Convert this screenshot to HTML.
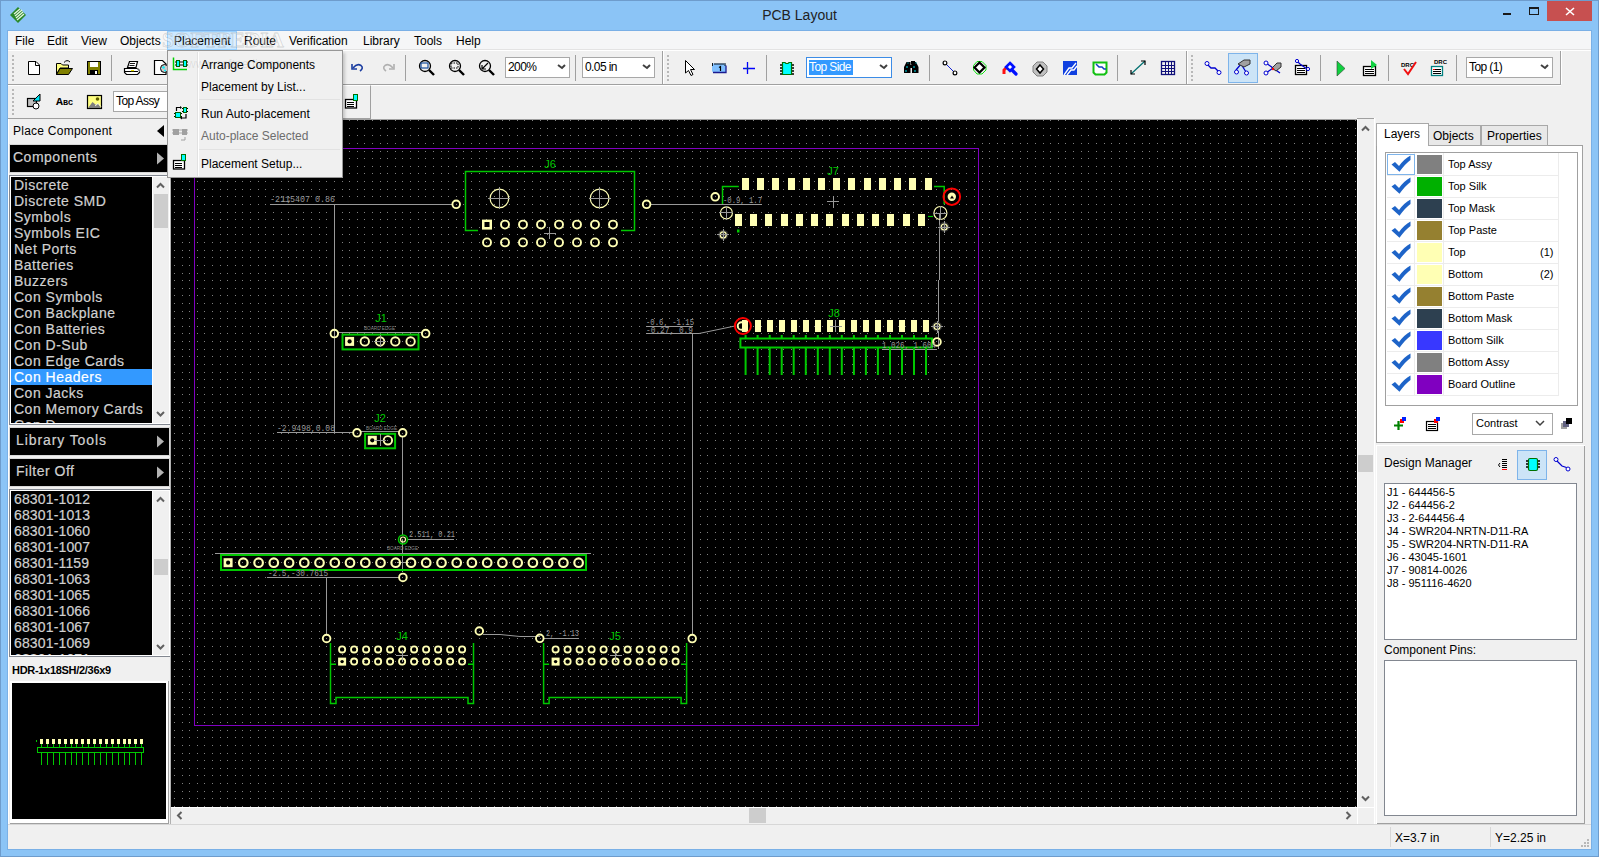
<!DOCTYPE html><html><head><meta charset="utf-8"><style>
*{box-sizing:border-box;margin:0;padding:0}
html,body{width:1599px;height:857px;overflow:hidden}
body{position:relative;background:#8bc4f6;font-family:"Liberation Sans",sans-serif;font-size:12px;color:#000}
.a{position:absolute}
.t{position:absolute;white-space:nowrap;line-height:1}
svg{position:absolute;overflow:visible}
</style></head><body>
<div class="a" style="left:0;top:0;width:1599px;height:857px;border:1px solid #6e9ccc"></div><svg style="left:0;top:0" width="1599" height="31">
<g transform="translate(18,15)"><path d="M0,-8 L8,0 L0,8 L-8,0Z" fill="#2a8a2a"/>
<path d="M-4,-1 L2,-6 M-3,1 L4,-5 M-2,3 L5,-3 M-1,5 L6,-1" stroke="#e8f5e0" stroke-width="1.3"/></g>
<rect x="1503" y="13" width="8" height="2" fill="#1a1a1a"/>
<rect x="1529.5" y="7.5" width="9" height="7" fill="none" stroke="#1a1a1a" stroke-width="1"/>
<rect x="1529" y="7" width="10" height="2" fill="#1a1a1a"/>
<rect x="1547" y="1" width="45" height="20" fill="#c75050"/>
<path d="M1566,8 L1574,15 M1574,8 L1566,15" stroke="#fff" stroke-width="1.6"/>
</svg><div class="t" style="left:0;width:1599px;text-align:center;top:8px;font-size:14px;color:#222">PCB Layout</div><div class="a" style="left:7px;top:30px;width:1585px;height:820px;border:1px solid #7ab0e6"></div><div class="a" style="left:8px;top:31px;width:1583px;height:818px;background:#f0f0f0"></div><div class="a" style="left:8px;top:31px;width:1583px;height:19px;background:#f5f6f7;border-bottom:1px solid #e3e3e3"></div><div class="a" style="left:167px;top:31px;width:70px;height:19px;background:#cce8ff;border:1px solid #99d1ff"></div><div class="t" style="left:15px;top:35px;font-size:12px">File</div><div class="t" style="left:47px;top:35px;font-size:12px">Edit</div><div class="t" style="left:81px;top:35px;font-size:12px">View</div><div class="t" style="left:120px;top:35px;font-size:12px">Objects</div><div class="t" style="left:174px;top:35px;font-size:12px">Placement</div><div class="t" style="left:244px;top:35px;font-size:12px">Route</div><div class="t" style="left:289px;top:35px;font-size:12px">Verification</div><div class="t" style="left:363px;top:35px;font-size:12px">Library</div><div class="t" style="left:414px;top:35px;font-size:12px">Tools</div><div class="t" style="left:456px;top:35px;font-size:12px">Help</div><div class="a" style="left:8px;top:50px;width:1583px;height:1px;background:#fff"></div><div class="a" style="left:8px;top:84px;width:1553px;height:1px;background:#a0a0a0"></div><div class="a" style="left:8px;top:85px;width:1553px;height:1px;background:#fff"></div><div class="a" style="left:8px;top:85px;width:363px;height:34px;border-top:1px solid #fff;border-bottom:1px solid #a0a0a0;border-right:1px solid #a0a0a0"></div><svg style="left:0;top:0" width="1" height="1"><text x="162" y="47" font-family="Liberation Serif" font-size="21" font-weight="bold" fill="rgba(255,255,255,0.35)" stroke="rgba(90,90,90,0.22)" stroke-width="0.8" textLength="122" lengthAdjust="spacingAndGlyphs">SOFTPEDIA</text></svg><svg style="left:171px;top:120px;overflow:hidden" width="1186" height="687" viewBox="171 120 1186 687"><rect x="171" y="120" width="1186" height="687" fill="#000"/><defs><mask id="gm" maskUnits="userSpaceOnUse" x="171" y="120" width="1186" height="687"><path d="M171 120.5h1186M171 128.5h1186M171 135.5h1186M171 143.5h1186M171 151.5h1186M171 158.5h1186M171 166.5h1186M171 173.5h1186M171 181.5h1186M171 189.5h1186M171 196.5h1186M171 204.5h1186M171 212.5h1186M171 219.5h1186M171 227.5h1186M171 234.5h1186M171 242.5h1186M171 250.5h1186M171 257.5h1186M171 265.5h1186M171 273.5h1186M171 280.5h1186M171 288.5h1186M171 295.5h1186M171 303.5h1186M171 311.5h1186M171 318.5h1186M171 326.5h1186M171 333.5h1186M171 341.5h1186M171 349.5h1186M171 356.5h1186M171 364.5h1186M171 372.5h1186M171 379.5h1186M171 387.5h1186M171 394.5h1186M171 402.5h1186M171 410.5h1186M171 417.5h1186M171 425.5h1186M171 433.5h1186M171 440.5h1186M171 448.5h1186M171 455.5h1186M171 463.5h1186M171 471.5h1186M171 478.5h1186M171 486.5h1186M171 493.5h1186M171 501.5h1186M171 509.5h1186M171 516.5h1186M171 524.5h1186M171 532.5h1186M171 539.5h1186M171 547.5h1186M171 554.5h1186M171 562.5h1186M171 570.5h1186M171 577.5h1186M171 585.5h1186M171 593.5h1186M171 600.5h1186M171 608.5h1186M171 615.5h1186M171 623.5h1186M171 631.5h1186M171 638.5h1186M171 646.5h1186M171 654.5h1186M171 661.5h1186M171 669.5h1186M171 676.5h1186M171 684.5h1186M171 692.5h1186M171 699.5h1186M171 707.5h1186M171 714.5h1186M171 722.5h1186M171 730.5h1186M171 737.5h1186M171 745.5h1186M171 753.5h1186M171 760.5h1186M171 768.5h1186M171 775.5h1186M171 783.5h1186M171 791.5h1186M171 798.5h1186M171 806.5h1186" stroke="#fff" stroke-width="1" shape-rendering="crispEdges"/></mask></defs><path mask="url(#gm)" d="M174.5 120v687M182.5 120v687M189.5 120v687M197.5 120v687M204.5 120v687M212.5 120v687M220.5 120v687M227.5 120v687M235.5 120v687M242.5 120v687M250.5 120v687M258.5 120v687M265.5 120v687M273.5 120v687M281.5 120v687M288.5 120v687M296.5 120v687M303.5 120v687M311.5 120v687M319.5 120v687M326.5 120v687M334.5 120v687M342.5 120v687M349.5 120v687M357.5 120v687M364.5 120v687M372.5 120v687M380.5 120v687M387.5 120v687M395.5 120v687M402.5 120v687M410.5 120v687M418.5 120v687M425.5 120v687M433.5 120v687M441.5 120v687M448.5 120v687M456.5 120v687M463.5 120v687M471.5 120v687M479.5 120v687M486.5 120v687M494.5 120v687M502.5 120v687M509.5 120v687M517.5 120v687M524.5 120v687M532.5 120v687M540.5 120v687M547.5 120v687M555.5 120v687M563.5 120v687M570.5 120v687M578.5 120v687M585.5 120v687M593.5 120v687M601.5 120v687M608.5 120v687M616.5 120v687M623.5 120v687M631.5 120v687M639.5 120v687M646.5 120v687M654.5 120v687M662.5 120v687M669.5 120v687M677.5 120v687M684.5 120v687M692.5 120v687M700.5 120v687M707.5 120v687M715.5 120v687M723.5 120v687M730.5 120v687M738.5 120v687M745.5 120v687M753.5 120v687M761.5 120v687M768.5 120v687M776.5 120v687M783.5 120v687M791.5 120v687M799.5 120v687M806.5 120v687M814.5 120v687M822.5 120v687M829.5 120v687M837.5 120v687M844.5 120v687M852.5 120v687M860.5 120v687M867.5 120v687M875.5 120v687M883.5 120v687M890.5 120v687M898.5 120v687M905.5 120v687M913.5 120v687M921.5 120v687M928.5 120v687M936.5 120v687M944.5 120v687M951.5 120v687M959.5 120v687M966.5 120v687M974.5 120v687M982.5 120v687M989.5 120v687M997.5 120v687M1004.5 120v687M1012.5 120v687M1020.5 120v687M1027.5 120v687M1035.5 120v687M1043.5 120v687M1050.5 120v687M1058.5 120v687M1065.5 120v687M1073.5 120v687M1081.5 120v687M1088.5 120v687M1096.5 120v687M1104.5 120v687M1111.5 120v687M1119.5 120v687M1126.5 120v687M1134.5 120v687M1142.5 120v687M1149.5 120v687M1157.5 120v687M1164.5 120v687M1172.5 120v687M1180.5 120v687M1187.5 120v687M1195.5 120v687M1203.5 120v687M1210.5 120v687M1218.5 120v687M1225.5 120v687M1233.5 120v687M1241.5 120v687M1248.5 120v687M1256.5 120v687M1264.5 120v687M1271.5 120v687M1279.5 120v687M1286.5 120v687M1294.5 120v687M1302.5 120v687M1309.5 120v687M1317.5 120v687M1325.5 120v687M1332.5 120v687M1340.5 120v687M1347.5 120v687M1355.5 120v687" stroke="#808080" stroke-width="1" shape-rendering="crispEdges"/><rect x="194.5" y="148.5" width="784" height="577" fill="none" stroke="#8000c0" stroke-width="1" shape-rendering="crispEdges"/><path d="M270 204.5H452" fill="none" stroke="#999999" stroke-width="1" shape-rendering="crispEdges"/><path d="M334.5 204V433" fill="none" stroke="#999999" stroke-width="1" shape-rendering="crispEdges"/><path d="M650 204.5H762" fill="none" stroke="#999999" stroke-width="1" shape-rendering="crispEdges"/><path d="M939.5 213V280 M938.5 280V349" fill="none" stroke="#999999" stroke-width="1" shape-rendering="crispEdges"/><path d="M646 326.5H693 M646 333.5H699" fill="none" stroke="#999999" stroke-width="1" shape-rendering="crispEdges"/><path d="M699 333.5L735 326" fill="none" stroke="#999999" stroke-width="1"/><path d="M692.5 333V634" fill="none" stroke="#999999" stroke-width="1" shape-rendering="crispEdges"/><path d="M882 349.5H937" fill="none" stroke="#999999" stroke-width="1" shape-rendering="crispEdges"/><path d="M338 332.5H422" fill="none" stroke="#999999" stroke-width="1" shape-rendering="crispEdges"/><path d="M277 432.5H353 M361 431.5H399" fill="none" stroke="#999999" stroke-width="1" shape-rendering="crispEdges"/><path d="M402.5 437V535" fill="none" stroke="#999999" stroke-width="1" shape-rendering="crispEdges"/><path d="M215 553.5H591" fill="none" stroke="#999999" stroke-width="1" shape-rendering="crispEdges"/><path d="M267 577.5H399" fill="none" stroke="#999999" stroke-width="1" shape-rendering="crispEdges"/><path d="M326.5 577V634" fill="none" stroke="#999999" stroke-width="1" shape-rendering="crispEdges"/><path d="M402.5 540V572 M397 562.5H409" fill="none" stroke="#999999" stroke-width="1" shape-rendering="crispEdges"/><path d="M407 539.5H454" fill="none" stroke="#999999" stroke-width="1" shape-rendering="crispEdges"/><path d="M483 634.5H500 L520 636.5 H540" fill="none" stroke="#999999" stroke-width="1"/><path d="M543 638.5H579" fill="none" stroke="#999999" stroke-width="1" shape-rendering="crispEdges"/><text x="550.0" y="168.0" fill="#00c800" font-family="Liberation Sans" font-size="11" text-anchor="middle">J6</text><path d="M478 230.5H465.5V171.5H634.5V230.5H621" fill="none" stroke="#00c800" stroke-width="1.5"/><circle cx="499.4" cy="198.4" r="9.3" fill="none" stroke="#ffffb4" stroke-width="1.2"/><path d="M488.4 198.4h22 M499.4 187.4v22" fill="none" stroke="#999999" stroke-width="1" shape-rendering="crispEdges"/><circle cx="599.6" cy="198.4" r="9.3" fill="none" stroke="#ffffb4" stroke-width="1.2"/><path d="M588.6 198.4h22 M599.6 187.4v22" fill="none" stroke="#999999" stroke-width="1" shape-rendering="crispEdges"/><rect x="482" y="219.6" width="10" height="10" fill="#ffffb4"/><rect x="484.5" y="222" width="5" height="5" fill="#000"/><circle cx="487.0" cy="242.4" r="4.0" fill="none" stroke="#ffffb4" stroke-width="1.92"/><circle cx="505.0" cy="224.6" r="4.0" fill="none" stroke="#ffffb4" stroke-width="1.92"/><circle cx="505.0" cy="242.4" r="4.0" fill="none" stroke="#ffffb4" stroke-width="1.92"/><circle cx="523.0" cy="224.6" r="4.0" fill="none" stroke="#ffffb4" stroke-width="1.92"/><circle cx="523.0" cy="242.4" r="4.0" fill="none" stroke="#ffffb4" stroke-width="1.92"/><circle cx="541.0" cy="224.6" r="4.0" fill="none" stroke="#ffffb4" stroke-width="1.92"/><circle cx="541.0" cy="242.4" r="4.0" fill="none" stroke="#ffffb4" stroke-width="1.92"/><circle cx="559.0" cy="224.6" r="4.0" fill="none" stroke="#ffffb4" stroke-width="1.92"/><circle cx="559.0" cy="242.4" r="4.0" fill="none" stroke="#ffffb4" stroke-width="1.92"/><circle cx="577.0" cy="224.6" r="4.0" fill="none" stroke="#ffffb4" stroke-width="1.92"/><circle cx="577.0" cy="242.4" r="4.0" fill="none" stroke="#ffffb4" stroke-width="1.92"/><circle cx="595.0" cy="224.6" r="4.0" fill="none" stroke="#ffffb4" stroke-width="1.92"/><circle cx="595.0" cy="242.4" r="4.0" fill="none" stroke="#ffffb4" stroke-width="1.92"/><circle cx="613.0" cy="224.6" r="4.0" fill="none" stroke="#ffffb4" stroke-width="1.92"/><circle cx="613.0" cy="242.4" r="4.0" fill="none" stroke="#ffffb4" stroke-width="1.92"/><path d="M543.6 233.2h12 M549.6 227.2v12" fill="none" stroke="#999999" stroke-width="1" shape-rendering="crispEdges"/><circle cx="456.2" cy="204.3" r="3.8" fill="none" stroke="#ffffb4" stroke-width="1.92"/><circle cx="646.6" cy="204.3" r="3.8" fill="none" stroke="#ffffb4" stroke-width="1.92"/><text x="833.0" y="175.0" fill="#00c800" font-family="Liberation Sans" font-size="11" text-anchor="middle">J7</text><circle cx="715.2" cy="196.8" r="3.8" fill="none" stroke="#ffffb4" stroke-width="1.92"/><path d="M738.8 186.5H722.5V204" fill="none" stroke="#00c800" stroke-width="1.5"/><text x="723.0" y="203.0" fill="#999999" font-family="Liberation Mono" font-size="9" textLength="39" lengthAdjust="spacingAndGlyphs">-0.9, 1.7</text><text x="270.0" y="202.0" fill="#999999" font-family="Liberation Mono" font-size="9" textLength="65" lengthAdjust="spacingAndGlyphs">-2.15407 0.86</text><text x="280.0" y="202.0" fill="#999999" font-family="Liberation Mono" font-size="9" textLength="12" lengthAdjust="spacingAndGlyphs">1;</text><rect x="742" y="178" width="7" height="12" fill="#ffffb4"/><rect x="735" y="214" width="7" height="12" fill="#ffffb4"/><rect x="757" y="178" width="7" height="12" fill="#ffffb4"/><rect x="750" y="214" width="7" height="12" fill="#ffffb4"/><rect x="772" y="178" width="7" height="12" fill="#ffffb4"/><rect x="765" y="214" width="7" height="12" fill="#ffffb4"/><rect x="788" y="178" width="7" height="12" fill="#ffffb4"/><rect x="781" y="214" width="7" height="12" fill="#ffffb4"/><rect x="803" y="178" width="7" height="12" fill="#ffffb4"/><rect x="796" y="214" width="7" height="12" fill="#ffffb4"/><rect x="818" y="178" width="7" height="12" fill="#ffffb4"/><rect x="811" y="214" width="7" height="12" fill="#ffffb4"/><rect x="833" y="178" width="7" height="12" fill="#ffffb4"/><rect x="826" y="214" width="7" height="12" fill="#ffffb4"/><rect x="848" y="178" width="7" height="12" fill="#ffffb4"/><rect x="842" y="214" width="7" height="12" fill="#ffffb4"/><rect x="864" y="178" width="7" height="12" fill="#ffffb4"/><rect x="857" y="214" width="7" height="12" fill="#ffffb4"/><rect x="879" y="178" width="7" height="12" fill="#ffffb4"/><rect x="872" y="214" width="7" height="12" fill="#ffffb4"/><rect x="894" y="178" width="7" height="12" fill="#ffffb4"/><rect x="887" y="214" width="7" height="12" fill="#ffffb4"/><rect x="909" y="178" width="7" height="12" fill="#ffffb4"/><rect x="903" y="214" width="7" height="12" fill="#ffffb4"/><rect x="925" y="178" width="7" height="12" fill="#ffffb4"/><rect x="918" y="214" width="7" height="12" fill="#ffffb4"/><path d="M827.3 201.6h12 M833.3 195.6v12" fill="none" stroke="#999999" stroke-width="1" shape-rendering="crispEdges"/><circle cx="726.4" cy="212.9" r="6.0" fill="none" stroke="#ffffb4" stroke-width="1.2"/><path d="M719.4 212.9h14 M726.4 205.9v14" fill="none" stroke="#999999" stroke-width="1" shape-rendering="crispEdges"/><rect x="737" y="229.5" width="2.5" height="3" fill="#00c800"/><circle cx="723.2" cy="234.9" r="5" fill="#303030"/><circle cx="723.2" cy="234.9" r="3.0" fill="none" stroke="#ffffb4" stroke-width="1.2"/><path d="M717.2 234.9h12 M723.2 228.9v12" fill="none" stroke="#999999" stroke-width="1" shape-rendering="crispEdges"/><path d="M934 186.5H944.2V204.3" fill="none" stroke="#00c800" stroke-width="1.5"/><circle cx="951.8" cy="196.7" r="8.3" fill="none" stroke="#ff0000" stroke-width="2"/><circle cx="951.8" cy="196.7" r="4.2" fill="#ffffb4"/><path d="M950 198.5h4l-2 -3z" fill="#000"/><circle cx="940.4" cy="213.0" r="6.5" fill="none" stroke="#ffffb4" stroke-width="1.2"/><path d="M933.4 213.0h14 M940.4 206.0v14" fill="none" stroke="#999999" stroke-width="1" shape-rendering="crispEdges"/><path d="M928 216.5H933" fill="none" stroke="#00c800" stroke-width="1.2"/><circle cx="944.2" cy="227" r="5" fill="#303030"/><circle cx="944.2" cy="227.0" r="3.0" fill="none" stroke="#ffffb4" stroke-width="1.2"/><path d="M938.2 227.0h12 M944.2 221.0v12" fill="none" stroke="#999999" stroke-width="1" shape-rendering="crispEdges"/><text x="834.0" y="317.0" fill="#00c800" font-family="Liberation Sans" font-size="11" text-anchor="middle">J8</text><text x="646.0" y="325.0" fill="#999999" font-family="Liberation Mono" font-size="9" textLength="48" lengthAdjust="spacingAndGlyphs">-0.6, -1.15</text><text x="646.0" y="333.0" fill="#999999" font-family="Liberation Mono" font-size="9" textLength="47" lengthAdjust="spacingAndGlyphs">-0.27, 0.9</text><rect x="742" y="320" width="6" height="12" fill="#ffffb4"/><path d="M745.6 335V338.5 M745.6 347.5V375" fill="none" stroke="#00c800" stroke-width="2"/><rect x="755" y="320" width="6" height="12" fill="#ffffb4"/><path d="M757.6 335V338.5 M757.6 347.5V375" fill="none" stroke="#00c800" stroke-width="2"/><rect x="767" y="320" width="6" height="12" fill="#ffffb4"/><path d="M769.7 335V338.5 M769.7 347.5V375" fill="none" stroke="#00c800" stroke-width="2"/><rect x="779" y="320" width="6" height="12" fill="#ffffb4"/><path d="M781.7 335V338.5 M781.7 347.5V375" fill="none" stroke="#00c800" stroke-width="2"/><rect x="791" y="320" width="6" height="12" fill="#ffffb4"/><path d="M793.7 335V338.5 M793.7 347.5V375" fill="none" stroke="#00c800" stroke-width="2"/><rect x="803" y="320" width="6" height="12" fill="#ffffb4"/><path d="M805.8 335V338.5 M805.8 347.5V375" fill="none" stroke="#00c800" stroke-width="2"/><rect x="815" y="320" width="6" height="12" fill="#ffffb4"/><path d="M817.8 335V338.5 M817.8 347.5V375" fill="none" stroke="#00c800" stroke-width="2"/><rect x="827" y="320" width="6" height="12" fill="#ffffb4"/><path d="M829.8 335V338.5 M829.8 347.5V375" fill="none" stroke="#00c800" stroke-width="2"/><rect x="839" y="320" width="6" height="12" fill="#ffffb4"/><path d="M841.8 335V338.5 M841.8 347.5V375" fill="none" stroke="#00c800" stroke-width="2"/><rect x="851" y="320" width="6" height="12" fill="#ffffb4"/><path d="M853.9 335V338.5 M853.9 347.5V375" fill="none" stroke="#00c800" stroke-width="2"/><rect x="863" y="320" width="6" height="12" fill="#ffffb4"/><path d="M865.9 335V338.5 M865.9 347.5V375" fill="none" stroke="#00c800" stroke-width="2"/><rect x="875" y="320" width="6" height="12" fill="#ffffb4"/><path d="M877.9 335V338.5 M877.9 347.5V375" fill="none" stroke="#00c800" stroke-width="2"/><rect x="887" y="320" width="6" height="12" fill="#ffffb4"/><path d="M890.0 335V338.5 M890.0 347.5V375" fill="none" stroke="#00c800" stroke-width="2"/><rect x="899" y="320" width="6" height="12" fill="#ffffb4"/><path d="M902.0 335V338.5 M902.0 347.5V375" fill="none" stroke="#00c800" stroke-width="2"/><rect x="911" y="320" width="6" height="12" fill="#ffffb4"/><path d="M914.0 335V338.5 M914.0 347.5V375" fill="none" stroke="#00c800" stroke-width="2"/><rect x="923" y="320" width="6" height="12" fill="#ffffb4"/><path d="M926.0 335V338.5 M926.0 347.5V375" fill="none" stroke="#00c800" stroke-width="2"/><rect x="740.4" y="338.5" width="191.6" height="9" fill="none" stroke="#00c800" stroke-width="2"/><circle cx="741.5" cy="326.0" r="3.8" fill="none" stroke="#ffffb4" stroke-width="1.92"/><circle cx="742.9" cy="326" r="8" fill="none" stroke="#ff0000" stroke-width="2"/><path d="M829.5 326.4h12 M835.5 320.4v12" fill="none" stroke="#999999" stroke-width="1" shape-rendering="crispEdges"/><circle cx="937" cy="326.5" r="5" fill="#303030"/><circle cx="937.0" cy="326.5" r="3.0" fill="none" stroke="#ffffb4" stroke-width="1.2"/><path d="M931.0 326.5h12 M937.0 320.5v12" fill="none" stroke="#999999" stroke-width="1" shape-rendering="crispEdges"/><circle cx="937.0" cy="341.9" r="3.8" fill="none" stroke="#ffffb4" stroke-width="1.92"/><text x="882.0" y="348.0" fill="#999999" font-family="Liberation Mono" font-size="9" textLength="54" lengthAdjust="spacingAndGlyphs">1.026, 1.604</text><text x="381.0" y="322.0" fill="#00c800" font-family="Liberation Sans" font-size="11" text-anchor="middle">J1</text><text x="364.0" y="330.0" fill="#8a8a8a" font-family="Liberation Sans" font-size="5.5" textLength="31" lengthAdjust="spacingAndGlyphs">BOARD EDGE</text><rect x="342.5" y="334.6" width="76" height="14.8" fill="none" stroke="#00c800" stroke-width="2"/><rect x="345.1" y="336.9" width="9" height="9" fill="#ffffb4"/><circle cx="349.6" cy="341.4" r="2.0999999999999996" fill="#000"/><circle cx="364.8" cy="341.4" r="4.2" fill="none" stroke="#ffffb4" stroke-width="1.92"/><circle cx="380.1" cy="341.4" r="4.2" fill="none" stroke="#ffffb4" stroke-width="1.92"/><circle cx="395.3" cy="341.4" r="4.2" fill="none" stroke="#ffffb4" stroke-width="1.92"/><circle cx="410.6" cy="341.4" r="4.2" fill="none" stroke="#ffffb4" stroke-width="1.92"/><path d="M374.1 341.4h12 M380.1 335.4v12" fill="none" stroke="#999999" stroke-width="1" shape-rendering="crispEdges"/><circle cx="334.3" cy="333.6" r="3.8" fill="none" stroke="#ffffb4" stroke-width="1.92"/><circle cx="425.7" cy="333.6" r="3.8" fill="none" stroke="#ffffb4" stroke-width="1.92"/><text x="380.0" y="422.0" fill="#00c800" font-family="Liberation Sans" font-size="11" text-anchor="middle">J2</text><text x="366.0" y="430.0" fill="#8a8a8a" font-family="Liberation Sans" font-size="5.5" textLength="31" lengthAdjust="spacingAndGlyphs">BOARD EDGE</text><text x="277.0" y="431.0" fill="#999999" font-family="Liberation Mono" font-size="9" textLength="58" lengthAdjust="spacingAndGlyphs">-2.9498,0.08</text><rect x="365.1" y="433.8" width="30" height="14.5" fill="none" stroke="#00c800" stroke-width="2"/><rect x="367.8" y="435.8" width="9" height="9" fill="#ffffb4"/><circle cx="372.3" cy="440.3" r="2.0999999999999996" fill="#000"/><circle cx="387.9" cy="440.3" r="4.2" fill="none" stroke="#ffffb4" stroke-width="1.92"/><path d="M374.0 440.3h12 M380.0 434.3v12" fill="none" stroke="#999999" stroke-width="1" shape-rendering="crispEdges"/><circle cx="357.0" cy="432.8" r="3.8" fill="none" stroke="#ffffb4" stroke-width="1.92"/><circle cx="402.7" cy="432.8" r="3.8" fill="none" stroke="#ffffb4" stroke-width="1.92"/><text x="387.0" y="550.0" fill="#8a8a8a" font-family="Liberation Sans" font-size="5.5" textLength="31" lengthAdjust="spacingAndGlyphs">BOARD EDGE</text><text x="409.0" y="537.0" fill="#999999" font-family="Liberation Mono" font-size="9" textLength="46" lengthAdjust="spacingAndGlyphs">2.511, 0.21</text><circle cx="403" cy="539.5" r="4.5" fill="none" stroke="#00c800" stroke-width="1.5"/><circle cx="403.0" cy="539.5" r="2.5" fill="none" stroke="#ffffb4" stroke-width="1.2"/><rect x="221" y="555" width="365" height="15" fill="none" stroke="#00c800" stroke-width="2"/><rect x="223.6" y="558.2" width="9" height="9" fill="#ffffb4"/><circle cx="228.1" cy="562.7" r="2.0999999999999996" fill="#000"/><circle cx="243.3" cy="562.7" r="4.3" fill="none" stroke="#ffffb4" stroke-width="2.16"/><circle cx="258.6" cy="562.7" r="4.3" fill="none" stroke="#ffffb4" stroke-width="2.16"/><circle cx="273.8" cy="562.7" r="4.3" fill="none" stroke="#ffffb4" stroke-width="2.16"/><circle cx="289.1" cy="562.7" r="4.3" fill="none" stroke="#ffffb4" stroke-width="2.16"/><circle cx="304.3" cy="562.7" r="4.3" fill="none" stroke="#ffffb4" stroke-width="2.16"/><circle cx="319.5" cy="562.7" r="4.3" fill="none" stroke="#ffffb4" stroke-width="2.16"/><circle cx="334.8" cy="562.7" r="4.3" fill="none" stroke="#ffffb4" stroke-width="2.16"/><circle cx="350.0" cy="562.7" r="4.3" fill="none" stroke="#ffffb4" stroke-width="2.16"/><circle cx="365.3" cy="562.7" r="4.3" fill="none" stroke="#ffffb4" stroke-width="2.16"/><circle cx="380.5" cy="562.7" r="4.3" fill="none" stroke="#ffffb4" stroke-width="2.16"/><circle cx="395.7" cy="562.7" r="4.3" fill="none" stroke="#ffffb4" stroke-width="2.16"/><circle cx="411.0" cy="562.7" r="4.3" fill="none" stroke="#ffffb4" stroke-width="2.16"/><circle cx="426.2" cy="562.7" r="4.3" fill="none" stroke="#ffffb4" stroke-width="2.16"/><circle cx="441.5" cy="562.7" r="4.3" fill="none" stroke="#ffffb4" stroke-width="2.16"/><circle cx="456.7" cy="562.7" r="4.3" fill="none" stroke="#ffffb4" stroke-width="2.16"/><circle cx="471.9" cy="562.7" r="4.3" fill="none" stroke="#ffffb4" stroke-width="2.16"/><circle cx="487.2" cy="562.7" r="4.3" fill="none" stroke="#ffffb4" stroke-width="2.16"/><circle cx="502.4" cy="562.7" r="4.3" fill="none" stroke="#ffffb4" stroke-width="2.16"/><circle cx="517.7" cy="562.7" r="4.3" fill="none" stroke="#ffffb4" stroke-width="2.16"/><circle cx="532.9" cy="562.7" r="4.3" fill="none" stroke="#ffffb4" stroke-width="2.16"/><circle cx="548.1" cy="562.7" r="4.3" fill="none" stroke="#ffffb4" stroke-width="2.16"/><circle cx="563.4" cy="562.7" r="4.3" fill="none" stroke="#ffffb4" stroke-width="2.16"/><circle cx="578.6" cy="562.7" r="4.3" fill="none" stroke="#ffffb4" stroke-width="2.16"/><text x="268.0" y="576.0" fill="#999999" font-family="Liberation Mono" font-size="9" textLength="60" lengthAdjust="spacingAndGlyphs">-2.5,-30.7615</text><circle cx="402.9" cy="577.4" r="3.8" fill="none" stroke="#ffffb4" stroke-width="1.92"/><text x="402.0" y="640.0" fill="#00c800" font-family="Liberation Sans" font-size="11" text-anchor="middle">J4</text><text x="615.0" y="640.0" fill="#00c800" font-family="Liberation Sans" font-size="11" text-anchor="middle">J5</text><text x="546.0" y="636.0" fill="#999999" font-family="Liberation Mono" font-size="9" textLength="33" lengthAdjust="spacingAndGlyphs">2, -1.13</text><path d="M330.5 643V703.5H336.0V697.5H468.0V703.5H473.5V643" fill="none" stroke="#00c800" stroke-width="1.5"/><path d="M330.5 664.3H336.0 M468.0 664.3H473.5" fill="none" stroke="#00c800" stroke-width="1.5"/><path d="M543.6 643V703.5H549.1V697.5H681.1V703.5H686.6V643" fill="none" stroke="#00c800" stroke-width="1.5"/><path d="M543.6 664.3H549.1 M681.1 664.3H686.6" fill="none" stroke="#00c800" stroke-width="1.5"/><circle cx="342.1" cy="649.4" r="3.1" fill="none" stroke="#ffffb4" stroke-width="1.7999999999999998"/><rect x="338.1" y="657.6" width="8" height="8" fill="#ffffb4"/><circle cx="342.1" cy="661.6" r="1.7249999999999999" fill="#000"/><circle cx="354.1" cy="649.4" r="3.1" fill="none" stroke="#ffffb4" stroke-width="1.7999999999999998"/><circle cx="354.1" cy="661.6" r="3.1" fill="none" stroke="#ffffb4" stroke-width="1.7999999999999998"/><circle cx="366.1" cy="649.4" r="3.1" fill="none" stroke="#ffffb4" stroke-width="1.7999999999999998"/><circle cx="366.1" cy="661.6" r="3.1" fill="none" stroke="#ffffb4" stroke-width="1.7999999999999998"/><circle cx="378.1" cy="649.4" r="3.1" fill="none" stroke="#ffffb4" stroke-width="1.7999999999999998"/><circle cx="378.1" cy="661.6" r="3.1" fill="none" stroke="#ffffb4" stroke-width="1.7999999999999998"/><circle cx="390.1" cy="649.4" r="3.1" fill="none" stroke="#ffffb4" stroke-width="1.7999999999999998"/><circle cx="390.1" cy="661.6" r="3.1" fill="none" stroke="#ffffb4" stroke-width="1.7999999999999998"/><circle cx="402.1" cy="649.4" r="3.1" fill="none" stroke="#ffffb4" stroke-width="1.7999999999999998"/><circle cx="402.1" cy="661.6" r="3.1" fill="none" stroke="#ffffb4" stroke-width="1.7999999999999998"/><circle cx="414.1" cy="649.4" r="3.1" fill="none" stroke="#ffffb4" stroke-width="1.7999999999999998"/><circle cx="414.1" cy="661.6" r="3.1" fill="none" stroke="#ffffb4" stroke-width="1.7999999999999998"/><circle cx="426.1" cy="649.4" r="3.1" fill="none" stroke="#ffffb4" stroke-width="1.7999999999999998"/><circle cx="426.1" cy="661.6" r="3.1" fill="none" stroke="#ffffb4" stroke-width="1.7999999999999998"/><circle cx="438.1" cy="649.4" r="3.1" fill="none" stroke="#ffffb4" stroke-width="1.7999999999999998"/><circle cx="438.1" cy="661.6" r="3.1" fill="none" stroke="#ffffb4" stroke-width="1.7999999999999998"/><circle cx="450.1" cy="649.4" r="3.1" fill="none" stroke="#ffffb4" stroke-width="1.7999999999999998"/><circle cx="450.1" cy="661.6" r="3.1" fill="none" stroke="#ffffb4" stroke-width="1.7999999999999998"/><circle cx="462.1" cy="649.4" r="3.1" fill="none" stroke="#ffffb4" stroke-width="1.7999999999999998"/><circle cx="462.1" cy="661.6" r="3.1" fill="none" stroke="#ffffb4" stroke-width="1.7999999999999998"/><path d="M396.1 655.5h12 M402.1 649.5v12" fill="none" stroke="#999999" stroke-width="1" shape-rendering="crispEdges"/><circle cx="555.6" cy="649.4" r="3.1" fill="none" stroke="#ffffb4" stroke-width="1.7999999999999998"/><rect x="551.6" y="657.6" width="8" height="8" fill="#ffffb4"/><circle cx="555.6" cy="661.6" r="1.7249999999999999" fill="#000"/><circle cx="567.6" cy="649.4" r="3.1" fill="none" stroke="#ffffb4" stroke-width="1.7999999999999998"/><circle cx="567.6" cy="661.6" r="3.1" fill="none" stroke="#ffffb4" stroke-width="1.7999999999999998"/><circle cx="579.6" cy="649.4" r="3.1" fill="none" stroke="#ffffb4" stroke-width="1.7999999999999998"/><circle cx="579.6" cy="661.6" r="3.1" fill="none" stroke="#ffffb4" stroke-width="1.7999999999999998"/><circle cx="591.6" cy="649.4" r="3.1" fill="none" stroke="#ffffb4" stroke-width="1.7999999999999998"/><circle cx="591.6" cy="661.6" r="3.1" fill="none" stroke="#ffffb4" stroke-width="1.7999999999999998"/><circle cx="603.6" cy="649.4" r="3.1" fill="none" stroke="#ffffb4" stroke-width="1.7999999999999998"/><circle cx="603.6" cy="661.6" r="3.1" fill="none" stroke="#ffffb4" stroke-width="1.7999999999999998"/><circle cx="615.6" cy="649.4" r="3.1" fill="none" stroke="#ffffb4" stroke-width="1.7999999999999998"/><circle cx="615.6" cy="661.6" r="3.1" fill="none" stroke="#ffffb4" stroke-width="1.7999999999999998"/><circle cx="627.6" cy="649.4" r="3.1" fill="none" stroke="#ffffb4" stroke-width="1.7999999999999998"/><circle cx="627.6" cy="661.6" r="3.1" fill="none" stroke="#ffffb4" stroke-width="1.7999999999999998"/><circle cx="639.6" cy="649.4" r="3.1" fill="none" stroke="#ffffb4" stroke-width="1.7999999999999998"/><circle cx="639.6" cy="661.6" r="3.1" fill="none" stroke="#ffffb4" stroke-width="1.7999999999999998"/><circle cx="651.6" cy="649.4" r="3.1" fill="none" stroke="#ffffb4" stroke-width="1.7999999999999998"/><circle cx="651.6" cy="661.6" r="3.1" fill="none" stroke="#ffffb4" stroke-width="1.7999999999999998"/><circle cx="663.6" cy="649.4" r="3.1" fill="none" stroke="#ffffb4" stroke-width="1.7999999999999998"/><circle cx="663.6" cy="661.6" r="3.1" fill="none" stroke="#ffffb4" stroke-width="1.7999999999999998"/><circle cx="675.6" cy="649.4" r="3.1" fill="none" stroke="#ffffb4" stroke-width="1.7999999999999998"/><circle cx="675.6" cy="661.6" r="3.1" fill="none" stroke="#ffffb4" stroke-width="1.7999999999999998"/><path d="M609.6 655.5h12 M615.6 649.5v12" fill="none" stroke="#999999" stroke-width="1" shape-rendering="crispEdges"/><circle cx="326.6" cy="638.5" r="3.8" fill="none" stroke="#ffffb4" stroke-width="1.92"/><circle cx="479.3" cy="631.0" r="3.8" fill="none" stroke="#ffffb4" stroke-width="1.92"/><circle cx="539.8" cy="638.3" r="3.8" fill="none" stroke="#ffffb4" stroke-width="1.92"/><circle cx="692.2" cy="638.6" r="3.8" fill="none" stroke="#ffffb4" stroke-width="1.92"/></svg><svg style="left:0;top:0" width="1599" height="857"><rect x="12" y="55" width="2" height="2" fill="#b8b8b8"/><rect x="12" y="59" width="2" height="2" fill="#b8b8b8"/><rect x="12" y="63" width="2" height="2" fill="#b8b8b8"/><rect x="12" y="67" width="2" height="2" fill="#b8b8b8"/><rect x="12" y="71" width="2" height="2" fill="#b8b8b8"/><rect x="12" y="75" width="2" height="2" fill="#b8b8b8"/><rect x="12" y="79" width="2" height="2" fill="#b8b8b8"/><rect x="12" y="89" width="2" height="2" fill="#b8b8b8"/><rect x="12" y="93" width="2" height="2" fill="#b8b8b8"/><rect x="12" y="97" width="2" height="2" fill="#b8b8b8"/><rect x="12" y="101" width="2" height="2" fill="#b8b8b8"/><rect x="12" y="105" width="2" height="2" fill="#b8b8b8"/><rect x="12" y="109" width="2" height="2" fill="#b8b8b8"/><rect x="12" y="113" width="2" height="2" fill="#b8b8b8"/><rect x="667" y="55" width="2" height="2" fill="#b8b8b8"/><rect x="667" y="59" width="2" height="2" fill="#b8b8b8"/><rect x="667" y="63" width="2" height="2" fill="#b8b8b8"/><rect x="667" y="67" width="2" height="2" fill="#b8b8b8"/><rect x="667" y="71" width="2" height="2" fill="#b8b8b8"/><rect x="667" y="75" width="2" height="2" fill="#b8b8b8"/><rect x="667" y="79" width="2" height="2" fill="#b8b8b8"/><rect x="1191" y="55" width="2" height="2" fill="#b8b8b8"/><rect x="1191" y="59" width="2" height="2" fill="#b8b8b8"/><rect x="1191" y="63" width="2" height="2" fill="#b8b8b8"/><rect x="1191" y="67" width="2" height="2" fill="#b8b8b8"/><rect x="1191" y="71" width="2" height="2" fill="#b8b8b8"/><rect x="1191" y="75" width="2" height="2" fill="#b8b8b8"/><rect x="1191" y="79" width="2" height="2" fill="#b8b8b8"/><path d="M662.5 51V84" stroke="#a0a0a0" stroke-width="1" shape-rendering="crispEdges"/><path d="M663.5 51V84" stroke="#fff" stroke-width="1" shape-rendering="crispEdges"/><path d="M1186.5 51V84" stroke="#a0a0a0" stroke-width="1" shape-rendering="crispEdges"/><path d="M1187.5 51V84" stroke="#fff" stroke-width="1" shape-rendering="crispEdges"/><path d="M1560.5 51V84" stroke="#a0a0a0" stroke-width="1" shape-rendering="crispEdges"/><path d="M1561.5 51V84" stroke="#fff" stroke-width="1" shape-rendering="crispEdges"/><path d="M111.5 55V81" stroke="#a0a0a0" stroke-width="1" shape-rendering="crispEdges"/><path d="M405.5 55V81" stroke="#a0a0a0" stroke-width="1" shape-rendering="crispEdges"/><path d="M575.5 55V81" stroke="#a0a0a0" stroke-width="1" shape-rendering="crispEdges"/><path d="M766.5 55V81" stroke="#a0a0a0" stroke-width="1" shape-rendering="crispEdges"/><path d="M929.5 55V81" stroke="#a0a0a0" stroke-width="1" shape-rendering="crispEdges"/><path d="M1117.5 55V81" stroke="#a0a0a0" stroke-width="1" shape-rendering="crispEdges"/><path d="M1320.5 55V81" stroke="#a0a0a0" stroke-width="1" shape-rendering="crispEdges"/><path d="M1388.5 55V81" stroke="#a0a0a0" stroke-width="1" shape-rendering="crispEdges"/><path d="M1456.5 55V81" stroke="#a0a0a0" stroke-width="1" shape-rendering="crispEdges"/><path d="M28.5 61.5H36L39.5 65V74.5H28.5Z" fill="#fff" stroke="#000" stroke-width="1"/><path d="M35.5 61.5V65.5H39.5" fill="none" stroke="#000" stroke-width="1"/><path d="M56.5 63.5H61L62.5 65H68.5V68H60L56.5 74.5Z" fill="#ffff80" stroke="#000" stroke-width="1"/><path d="M56.5 74.5L60 68.5H72.5L68.5 74.5Z" fill="#808000" stroke="#000" stroke-width="1"/><path d="M64 62.5Q67 59 70 62" fill="none" stroke="#000" stroke-width="1"/><rect x="87.5" y="61.5" width="13" height="13" fill="#808000" stroke="#000" stroke-width="1"/><rect x="90" y="62" width="8" height="5" fill="#fff"/><rect x="90" y="70" width="8" height="4.5" fill="#000"/><rect x="95" y="71" width="2" height="3" fill="#fff"/><path d="M129.5 61.5H137.5L136 67.5H127.5Z" fill="#fff" stroke="#000" stroke-width="1.2"/><path d="M130 63.5H135 M129.5 65.5H134.5" stroke="#000" stroke-width="0.9"/><path d="M124.5 68.5H137.5L139.5 70.5V72.5L137.5 74.5H126.5L124.5 72.5Z" fill="#fff" stroke="#000" stroke-width="1.2"/><path d="M125 71.5H138" stroke="#000" stroke-width="1"/><rect x="131" y="70" width="3" height="1.2" fill="#e8e000"/><path d="M137 68L140 71 M138 73L140 71" stroke="#808080" stroke-width="0.8"/><path d="M154.5 60.5H162.5L166 64V74.5H154.5Z" fill="#fff" stroke="#000" stroke-width="1.2"/><circle cx="164.5" cy="68.5" r="4" fill="#d0c8c8" stroke="#000" stroke-width="1"/><circle cx="163.5" cy="67.5" r="1.3" fill="#00f0ff"/><circle cx="165" cy="70.5" r="1" fill="#00f0ff"/><path d="M353 68Q357 63 361 65.5Q364 68 360 71" fill="none" stroke="#1a3ca0" stroke-width="1.6"/><path d="M352 64V69H357" fill="none" stroke="#1a3ca0" stroke-width="1.6"/><path d="M393 68Q389 63 385 65.5Q382 68 386 71" fill="none" stroke="#b0b0b0" stroke-width="1.6"/><path d="M394 64V69H389" fill="none" stroke="#b0b0b0" stroke-width="1.6"/><circle cx="425" cy="66" r="5.5" fill="none" stroke="#000" stroke-width="1.3"/><path d="M429 70L434 75" stroke="#000" stroke-width="2.4"/><rect x="421" y="63" width="7" height="5" fill="none" stroke="#1a50a0" stroke-width="1.2"/><circle cx="455" cy="66" r="5.5" fill="none" stroke="#000" stroke-width="1.3"/><path d="M459 70L464 75" stroke="#000" stroke-width="2.4"/><rect x="451" y="63" width="7" height="5" fill="none" stroke="#000" stroke-dasharray="1.5 1" stroke-width="1"/><circle cx="485" cy="66" r="5.5" fill="none" stroke="#000" stroke-width="1.3"/><path d="M489 70L494 75" stroke="#000" stroke-width="2.4"/><path d="M488 63L482 69 M482 65V69H486" fill="none" stroke="#000" stroke-width="1.2"/><path d="M685.5 60.5V73L688.5 70.5L691 75.5L693 74.5L690.5 69.5H694.5Z" fill="#fff" stroke="#000" stroke-width="1"/><path d="M712 63.5H725L726 65V72.5H713L712 71Z" fill="#80c0ff"/><path d="M713 72.5H726V65.5" stroke="#1a1a90" stroke-width="1.3" fill="none"/><path d="M712.5 63V66 M715 63V65 M717 63V65 M719 63V65 M721 63V65 M723 63V65 M725 63V66" stroke="#000" stroke-width="0.9"/><path d="M719 67.5L720.5 66.5V71" stroke="#000" stroke-width="1.2" fill="none"/><path d="M743 68.5H755 M747.5 62V74" stroke="#0000ff" stroke-width="1.3"/><circle cx="747.5" cy="68.5" r="1" fill="#006060"/><path d="M782.5 62.5H785L786 63.5H788L789 62.5H791.5V74.5H782.5Z" fill="#00ffff" stroke="#007000" stroke-width="1.2"/><path d="M780 65H782 M780 68H782 M780 71H782 M780 74H782 M792 65H794 M792 68H794 M792 71H794 M792 74H794" stroke="#000" stroke-width="1.4"/><path d="M907 61H911V64L912 66H914L915 64V61H919V61Z" fill="#000"/><path d="M904 73V67L906.5 62H910.5V73Z M912 73V62H916L918.5 67V73Z" fill="#000"/><rect x="910" y="65" width="3" height="3" fill="#000"/><path d="M908 62.5v1 M916 62.5v1 M907 66v2 M914 66v2 M906 70v2 M915 70v2" stroke="#00e0f0" stroke-width="1"/><path d="M945 63L955 73" stroke="#1020d0" stroke-width="1"/><circle cx="945" cy="62.9" r="1.9" fill="#fff" stroke="#000" stroke-width="1.2"/><circle cx="955" cy="72.9" r="1.9" fill="#fff" stroke="#000" stroke-width="1.2"/><path d="M977 61.5H982L986 65.5V70L982 74H977L973.5 70V65.5Z" fill="none" stroke="#10e010" stroke-width="1"/><path d="M979.5 62.5L984.5 67.5L979.5 72.5L974.5 67.5Z" fill="#fff" stroke="#000" stroke-width="2.2"/><path d="M1004 74V70L1007 67" stroke="#ff1010" stroke-width="3" fill="none"/><path d="M1010 63L1014 67L1010 71L1006 67Z" fill="#fff" stroke="#0010ff" stroke-width="2.6"/><path d="M1012 70L1016 74" stroke="#0010ff" stroke-width="3.2" stroke-linecap="round"/><path d="M1037 62H1043L1047 66V72L1043 76H1037L1033 72V66Z" fill="#c0c0c0" stroke="#808080" stroke-width="1"/><path d="M1040 65L1043.5 69L1040 73L1036.5 69Z" fill="#fff" stroke="#000" stroke-width="1.5"/><rect x="1063" y="61" width="14" height="14" fill="#1040e0"/><path d="M1064 75L1069 68H1072L1076 63 M1067 75L1071 70H1074L1077 66" stroke="#fff" stroke-width="1.3" fill="none"/><path d="M1093.5 62.5H1106.5V72.5L1104.5 74.5H1095.5L1093.5 72.5Z" fill="#fff" stroke="#10c010" stroke-width="2"/><path d="M1096 64L1099 67H1102L1104 69H1106" stroke="#1040c0" stroke-width="1.5" fill="none"/><path d="M1131 74L1145 61" stroke="#007070" stroke-width="1.2"/><path d="M1131 70V74H1135 M1141 61H1145V65" fill="none" stroke="#000" stroke-width="1.2"/><rect x="1161.5" y="61.5" width="13" height="13" fill="none" stroke="#10107a" stroke-width="1.3"/><path d="M1161 65.5H1175 M1161 68.5H1175 M1161 71.5H1175 M1165.5 61V75 M1168.5 61V75 M1171.5 61V75" stroke="#10107a" stroke-width="1"/><path d="M1207 64L1211 68H1215L1219 72" stroke="#0000d0" stroke-width="1.3" fill="none"/><circle cx="1207" cy="63.5" r="2" fill="#fff" stroke="#0000d0"/><circle cx="1219" cy="72.5" r="2" fill="#fff" stroke="#0000d0"/><rect x="1228.5" y="53.5" width="29" height="29" fill="#cce4f7" stroke="#7eb4ea" stroke-width="1"/><path d="M1236 70L1241 64L1246 72" stroke="#0000d0" stroke-width="1.3" fill="none"/><circle cx="1236.5" cy="72" r="2" fill="#fff" stroke="#0000d0"/><circle cx="1246.5" cy="73" r="2" fill="#fff" stroke="#0000d0"/><path d="M1238 64L1244 60H1250V64L1244 67Z" fill="#a0a0a0" stroke="#303030" stroke-width="1"/><path d="M1266 63L1280 73 M1266 73L1273 68" stroke="#0000d0" stroke-width="1.3" fill="none"/><circle cx="1266" cy="63" r="2" fill="#fff" stroke="#0000d0"/><circle cx="1266" cy="73" r="2" fill="#fff" stroke="#0000d0"/><path d="M1272 68L1277 63H1281V67L1276 71Z" fill="#a0a0a0" stroke="#303030" stroke-width="1"/><circle cx="1273" cy="69" r="1.2" fill="#f00"/><rect x="1295.5" y="65.5" width="11" height="9" fill="#fff" stroke="#000" stroke-width="1.3"/><path d="M1297 68.5H1305 M1297 70.5H1305 M1297 72.5H1305" stroke="#000" stroke-width="1"/><path d="M1297 61L1300 64L1307 69" stroke="#0000d0" stroke-width="1.2" fill="none"/><circle cx="1297" cy="61" r="1.6" fill="#fff" stroke="#0000d0"/><circle cx="1308" cy="69" r="1.6" fill="#fff" stroke="#0000d0"/><path d="M1337 61V76L1345 68.5Z" fill="#10d040" stroke="#304030" stroke-width="0.6"/><rect x="1363.5" y="66.5" width="12" height="9" fill="#fff" stroke="#000" stroke-width="1.3"/><path d="M1365 69.5H1374 M1365 71.5H1374 M1365 73.5H1374" stroke="#000" stroke-width="1"/><path d="M1371 60L1377 65L1371 69Z" fill="#10d040"/><text x="1401" y="67" font-family="Liberation Sans" font-size="6" font-weight="bold" fill="#000">DRC</text><path d="M1404 69L1408 74L1416 62" stroke="#f01010" stroke-width="2" fill="none"/><rect x="1431.5" y="66.5" width="11" height="9" fill="#fff" stroke="#008080" stroke-width="1.3"/><path d="M1433 69.5H1441 M1433 71.5H1441 M1433 73.5H1441" stroke="#000" stroke-width="1"/><path d="M1433 69.5H1435" stroke="#f00" stroke-width="1"/><text x="1434" y="64" font-family="Liberation Sans" font-size="6" font-weight="bold" fill="#000">DRC</text><g transform="translate(0,2)"><rect x="27.5" y="96.5" width="9" height="8" fill="#c0c0c0" stroke="#000" stroke-width="1.2"/><path d="M33 99L40 92V99Z" fill="#00e0f0" stroke="#000" stroke-width="1"/><circle cx="36" cy="104" r="3" fill="#fff" stroke="#000" stroke-width="1"/></g><text x="56" y="105" font-family="Liberation Mono" font-size="11" font-weight="bold" fill="#000" textLength="17" lengthAdjust="spacingAndGlyphs">A<tspan font-size="8">BC</tspan></text><g transform="translate(0,1)"><rect x="87.5" y="94.5" width="14" height="13" fill="#ffff80" stroke="#000" stroke-width="1.2"/><path d="M88 107L92.5 101L96 104L98 102.5L101 107Z" fill="#808080"/><path d="M95 105L98 102.5L101 105.5" stroke="#fff" fill="none" stroke-width="0.8"/><circle cx="97.5" cy="98" r="1.8" fill="#606000"/></g><rect x="345.5" y="99.5" width="11" height="8.5" fill="#fff" stroke="#000" stroke-width="1.3"/><path d="M347 102.5H354 M347 104.5H354 M347 106.5H354" stroke="#000" stroke-width="1"/><rect x="353.5" y="94.5" width="4" height="6" fill="#00ffff" stroke="#007000"/></svg><div class="a" style="left:505px;top:57px;width:65px;height:21px;background:#fff;border:1px solid #a8a8a8"></div><div class="t" style="left:508px;top:61px;font-size:12px;color:#000;letter-spacing:-0.6px">200%</div><svg style="left:0;top:0" width="1" height="1"><path d="M558 65L562 68L565 65" fill="none" stroke="#404040" stroke-width="2"/></svg><div class="a" style="left:582px;top:57px;width:73px;height:21px;background:#fff;border:1px solid #a8a8a8"></div><div class="t" style="left:585px;top:61px;font-size:12px;color:#000;letter-spacing:-0.6px">0.05 in</div><svg style="left:0;top:0" width="1" height="1"><path d="M643 65L647 68L650 65" fill="none" stroke="#404040" stroke-width="2"/></svg><div class="a" style="left:806px;top:57px;width:86px;height:21px;background:#fff;border:1px solid #3c8ce6"></div><div class="a" style="left:809px;top:60px;width:44px;height:15px;background:#3399ff"></div><div class="t" style="left:809px;top:61px;font-size:12px;color:#fff;letter-spacing:-0.6px">Top Side</div><svg style="left:0;top:0" width="1" height="1"><path d="M880 65L884 68L887 65" fill="none" stroke="#404040" stroke-width="2"/></svg><div class="a" style="left:1466px;top:57px;width:87px;height:21px;background:#fff;border:1px solid #a8a8a8"></div><div class="t" style="left:1469px;top:61px;font-size:12px;color:#000;letter-spacing:-0.6px">Top (1)</div><svg style="left:0;top:0" width="1" height="1"><path d="M1541 65L1545 68L1548 65" fill="none" stroke="#404040" stroke-width="2"/></svg><div class="a" style="left:113px;top:91px;width:215px;height:21px;background:#fff;border:1px solid #a8a8a8"></div><div class="t" style="left:116px;top:95px;font-size:12px;letter-spacing:-0.6px">Top Assy</div><div class="a" style="left:8px;top:119px;width:1px;height:705px;background:#fff"></div><div class="t" style="left:13px;top:125px;font-size:12px;color:#000;letter-spacing:0.25px">Place Component</div><div class="a" style="left:9px;top:144px;width:161px;height:29px;background:#000;border:1px solid #d8d8d8"></div><div class="t" style="left:13px;top:150px;font-size:14px;color:#d0d0d0;letter-spacing:0.5px;-webkit-text-stroke:0.2px">Components</div><div class="a" style="left:9px;top:427px;width:161px;height:29px;background:#000;border:1px solid #d8d8d8"></div><div class="t" style="left:16px;top:433px;font-size:14px;color:#d0d0d0;letter-spacing:0.9px;-webkit-text-stroke:0.2px">Library Tools</div><div class="a" style="left:9px;top:458px;width:161px;height:29px;background:#000;border:1px solid #d8d8d8"></div><div class="t" style="left:16px;top:464px;font-size:14px;color:#d0d0d0;letter-spacing:0.5px;-webkit-text-stroke:0.2px">Filter Off</div><div class="a" style="left:9px;top:175px;width:162px;height:250px;border:1px solid #828790;background:#fff"></div><div class="a" style="left:153px;top:177px;width:16px;height:246px;background:#f0f0f0"></div><div class="a" style="left:11px;top:177px;width:141px;height:246px;background:#000;overflow:hidden"><div class="t" style="left:3px;top:1px;font-size:14px;color:#d0d0d0;letter-spacing:0.5px;-webkit-text-stroke:0.2px">Discrete</div><div class="t" style="left:3px;top:17px;font-size:14px;color:#d0d0d0;letter-spacing:0.5px;-webkit-text-stroke:0.2px">Discrete SMD</div><div class="t" style="left:3px;top:33px;font-size:14px;color:#d0d0d0;letter-spacing:0.5px;-webkit-text-stroke:0.2px">Symbols</div><div class="t" style="left:3px;top:49px;font-size:14px;color:#d0d0d0;letter-spacing:0.5px;-webkit-text-stroke:0.2px">Symbols EIC</div><div class="t" style="left:3px;top:65px;font-size:14px;color:#d0d0d0;letter-spacing:0.5px;-webkit-text-stroke:0.2px">Net Ports</div><div class="t" style="left:3px;top:81px;font-size:14px;color:#d0d0d0;letter-spacing:0.5px;-webkit-text-stroke:0.2px">Batteries</div><div class="t" style="left:3px;top:97px;font-size:14px;color:#d0d0d0;letter-spacing:0.5px;-webkit-text-stroke:0.2px">Buzzers</div><div class="t" style="left:3px;top:113px;font-size:14px;color:#d0d0d0;letter-spacing:0.5px;-webkit-text-stroke:0.2px">Con Symbols</div><div class="t" style="left:3px;top:129px;font-size:14px;color:#d0d0d0;letter-spacing:0.5px;-webkit-text-stroke:0.2px">Con Backplane</div><div class="t" style="left:3px;top:145px;font-size:14px;color:#d0d0d0;letter-spacing:0.5px;-webkit-text-stroke:0.2px">Con Batteries</div><div class="t" style="left:3px;top:161px;font-size:14px;color:#d0d0d0;letter-spacing:0.5px;-webkit-text-stroke:0.2px">Con D-Sub</div><div class="t" style="left:3px;top:177px;font-size:14px;color:#d0d0d0;letter-spacing:0.5px;-webkit-text-stroke:0.2px">Con Edge Cards</div><div class="a" style="left:0;top:192px;width:141px;height:16px;background:#3399ff"></div><div class="t" style="left:3px;top:193px;font-size:14px;color:#fff;letter-spacing:0.5px;-webkit-text-stroke:0.2px">Con Headers</div><div class="t" style="left:3px;top:209px;font-size:14px;color:#d0d0d0;letter-spacing:0.5px;-webkit-text-stroke:0.2px">Con Jacks</div><div class="t" style="left:3px;top:225px;font-size:14px;color:#d0d0d0;letter-spacing:0.5px;-webkit-text-stroke:0.2px">Con Memory Cards</div><div class="t" style="left:3px;top:241px;font-size:14px;color:#d0d0d0;letter-spacing:0.5px;-webkit-text-stroke:0.2px">Con D...</div></div><div class="a" style="left:154px;top:194px;width:14px;height:34px;background:#cdcdcd"></div><div class="a" style="left:9px;top:489px;width:162px;height:168px;border:1px solid #828790;background:#fff"></div><div class="a" style="left:153px;top:491px;width:16px;height:164px;background:#f0f0f0"></div><div class="a" style="left:11px;top:491px;width:141px;height:164px;background:#000;overflow:hidden"><div class="t" style="left:3px;top:1px;font-size:14px;color:#d0d0d0;letter-spacing:0.15px;-webkit-text-stroke:0.2px">68301-1012</div><div class="t" style="left:3px;top:17px;font-size:14px;color:#d0d0d0;letter-spacing:0.15px;-webkit-text-stroke:0.2px">68301-1013</div><div class="t" style="left:3px;top:33px;font-size:14px;color:#d0d0d0;letter-spacing:0.15px;-webkit-text-stroke:0.2px">68301-1060</div><div class="t" style="left:3px;top:49px;font-size:14px;color:#d0d0d0;letter-spacing:0.15px;-webkit-text-stroke:0.2px">68301-1007</div><div class="t" style="left:3px;top:65px;font-size:14px;color:#d0d0d0;letter-spacing:0.15px;-webkit-text-stroke:0.2px">68301-1159</div><div class="t" style="left:3px;top:81px;font-size:14px;color:#d0d0d0;letter-spacing:0.15px;-webkit-text-stroke:0.2px">68301-1063</div><div class="t" style="left:3px;top:97px;font-size:14px;color:#d0d0d0;letter-spacing:0.15px;-webkit-text-stroke:0.2px">68301-1065</div><div class="t" style="left:3px;top:113px;font-size:14px;color:#d0d0d0;letter-spacing:0.15px;-webkit-text-stroke:0.2px">68301-1066</div><div class="t" style="left:3px;top:129px;font-size:14px;color:#d0d0d0;letter-spacing:0.15px;-webkit-text-stroke:0.2px">68301-1067</div><div class="t" style="left:3px;top:145px;font-size:14px;color:#d0d0d0;letter-spacing:0.15px;-webkit-text-stroke:0.2px">68301-1069</div><div class="t" style="left:3px;top:161px;font-size:14px;color:#d0d0d0;letter-spacing:0.15px;-webkit-text-stroke:0.2px">68301-1071</div></div><div class="a" style="left:154px;top:559px;width:14px;height:16px;background:#cdcdcd"></div><div class="t" style="left:12px;top:665px;font-size:11px;font-weight:bold;color:#000;letter-spacing:-0.3px">HDR-1x18SH/2/36x9</div><div class="a" style="left:10px;top:681px;width:159px;height:143px;background:#fff;border-right:1px solid #a0a0a0;border-bottom:1px solid #a0a0a0"></div><div class="a" style="left:12px;top:683px;width:154px;height:136px;background:#000"></div><svg style="left:0;top:0" width="1599" height="857"><path d="M164 125L157 131L164 137Z" fill="#000"/><path d="M157 152.5L164 158.5L157 164.5Z" fill="#b4b4b4"/><path d="M157 435.5L164 441.5L157 447.5Z" fill="#b4b4b4"/><path d="M157 466.5L164 472.5L157 478.5Z" fill="#b4b4b4"/><path d="M157.0 187.5L160.5 184L164.0 187.5" fill="none" stroke="#606060" stroke-width="2"/><path d="M157.0 412.0L160.5 415.5L164.0 412.0" fill="none" stroke="#606060" stroke-width="2"/><path d="M157.0 501.5L160.5 498L164.0 501.5" fill="none" stroke="#606060" stroke-width="2"/><path d="M157.0 645.0L160.5 648.5L164.0 645.0" fill="none" stroke="#606060" stroke-width="2"/><rect x="40" y="739" width="3" height="5" fill="#ffffb4"/><path d="M41.5 744V747 M41.5 752V765" stroke="#00c800" stroke-width="1" shape-rendering="crispEdges"/><rect x="46" y="739" width="3" height="5" fill="#ffffb4"/><path d="M47.5 744V747 M47.5 752V765" stroke="#00c800" stroke-width="1" shape-rendering="crispEdges"/><rect x="52" y="739" width="3" height="5" fill="#ffffb4"/><path d="M53.5 744V747 M53.5 752V765" stroke="#00c800" stroke-width="1" shape-rendering="crispEdges"/><rect x="58" y="739" width="3" height="5" fill="#ffffb4"/><path d="M59.5 744V747 M59.5 752V765" stroke="#00c800" stroke-width="1" shape-rendering="crispEdges"/><rect x="64" y="739" width="3" height="5" fill="#ffffb4"/><path d="M65.5 744V747 M65.5 752V765" stroke="#00c800" stroke-width="1" shape-rendering="crispEdges"/><rect x="70" y="739" width="3" height="5" fill="#ffffb4"/><path d="M71.5 744V747 M71.5 752V765" stroke="#00c800" stroke-width="1" shape-rendering="crispEdges"/><rect x="75" y="739" width="3" height="5" fill="#ffffb4"/><path d="M76.5 744V747 M76.5 752V765" stroke="#00c800" stroke-width="1" shape-rendering="crispEdges"/><rect x="81" y="739" width="3" height="5" fill="#ffffb4"/><path d="M82.5 744V747 M82.5 752V765" stroke="#00c800" stroke-width="1" shape-rendering="crispEdges"/><rect x="87" y="739" width="3" height="5" fill="#ffffb4"/><path d="M88.5 744V747 M88.5 752V765" stroke="#00c800" stroke-width="1" shape-rendering="crispEdges"/><rect x="93" y="739" width="3" height="5" fill="#ffffb4"/><path d="M94.5 744V747 M94.5 752V765" stroke="#00c800" stroke-width="1" shape-rendering="crispEdges"/><rect x="99" y="739" width="3" height="5" fill="#ffffb4"/><path d="M100.5 744V747 M100.5 752V765" stroke="#00c800" stroke-width="1" shape-rendering="crispEdges"/><rect x="105" y="739" width="3" height="5" fill="#ffffb4"/><path d="M106.5 744V747 M106.5 752V765" stroke="#00c800" stroke-width="1" shape-rendering="crispEdges"/><rect x="111" y="739" width="3" height="5" fill="#ffffb4"/><path d="M112.5 744V747 M112.5 752V765" stroke="#00c800" stroke-width="1" shape-rendering="crispEdges"/><rect x="117" y="739" width="3" height="5" fill="#ffffb4"/><path d="M118.5 744V747 M118.5 752V765" stroke="#00c800" stroke-width="1" shape-rendering="crispEdges"/><rect x="123" y="739" width="3" height="5" fill="#ffffb4"/><path d="M124.5 744V747 M124.5 752V765" stroke="#00c800" stroke-width="1" shape-rendering="crispEdges"/><rect x="128" y="739" width="3" height="5" fill="#ffffb4"/><path d="M129.5 744V747 M129.5 752V765" stroke="#00c800" stroke-width="1" shape-rendering="crispEdges"/><rect x="134" y="739" width="3" height="5" fill="#ffffb4"/><path d="M135.5 744V747 M135.5 752V765" stroke="#00c800" stroke-width="1" shape-rendering="crispEdges"/><rect x="140" y="739" width="3" height="5" fill="#ffffb4"/><path d="M141.5 744V747 M141.5 752V765" stroke="#00c800" stroke-width="1" shape-rendering="crispEdges"/><rect x="37.5" y="747.5" width="106" height="5" fill="none" stroke="#00c800" stroke-width="1" shape-rendering="crispEdges"/><rect x="36" y="740" width="1" height="2" fill="#00c800"/></svg><div class="a" style="left:170px;top:119px;width:1px;height:705px;background:#b0b0b0"></div><div class="a" style="left:1357px;top:119px;width:1px;height:705px;background:#fff"></div><div class="a" style="left:171px;top:807px;width:1204px;height:1px;background:#fff"></div><div class="a" style="left:1358px;top:455px;width:15px;height:17px;background:#cdcdcd"></div><div class="a" style="left:749px;top:808px;width:17px;height:15px;background:#cdcdcd"></div><div class="a" style="left:8px;top:824px;width:1583px;height:1px;background:#d7d7d7"></div><div class="a" style="left:1390px;top:827px;width:1px;height:20px;background:#d7d7d7"></div><div class="a" style="left:1490px;top:827px;width:1px;height:20px;background:#d7d7d7"></div><div class="t" style="left:1395px;top:832px;font-size:12px">X=3.7 in</div><div class="t" style="left:1495px;top:832px;font-size:12px">Y=2.25 in</div><div class="a" style="left:1374px;top:118px;width:2px;height:706px;background:#fff"></div><div class="a" style="left:1357px;top:118px;width:17px;height:1px;background:#a0a0a0"></div><div class="a" style="left:171px;top:119px;width:1186px;height:1px;background:#a0a0a0"></div><div class="a" style="left:1376px;top:445px;width:209px;height:379px;border-right:1px solid #a0a0a0;border-bottom:1px solid #a0a0a0;border-left:1px solid #fff;border-top:1px solid #fff"></div><div class="a" style="left:1375px;top:118px;width:1px;height:706px;background:#f5f5f5"></div><div class="a" style="left:1376px;top:145px;width:207px;height:298px;background:#fff;border:1px solid #a0a0a0"></div><div class="a" style="left:1428px;top:125px;width:53px;height:21px;background:#e8e8e8;border:1px solid #a8a8a8"></div><div class="a" style="left:1481px;top:125px;width:67px;height:21px;background:#e8e8e8;border:1px solid #a8a8a8"></div><div class="a" style="left:1376px;top:123px;width:53px;height:23px;background:#fff;border:1px solid #a8a8a8;border-bottom:none"></div><div class="t" style="left:1384px;top:128px;font-size:12px">Layers</div><div class="t" style="left:1433px;top:130px;font-size:12px">Objects</div><div class="t" style="left:1487px;top:130px;font-size:12px">Properties</div><div class="a" style="left:1385px;top:152px;width:193px;height:254px;border:1px solid #a0a0a0;background:#fff"></div><svg style="left:0;top:0" width="1599" height="857"><rect x="1417" y="155" width="25" height="19" fill="#808080"/><path d="M1391.5 164.5 L1395 162.0 L1399 166.0 Q1404 159.0 1410.5 155.5 L1410.5 160.0 Q1405 164.0 1399.5 171.8 Z" fill="#1e64c8"/><path d="M1387 175.5H1559 M1414.5 153V175 M1443.5 153V175 M1558.5 153V175" stroke="#ececec" stroke-width="1" shape-rendering="crispEdges"/><rect x="1417" y="177" width="25" height="19" fill="#00b000"/><path d="M1391.5 186.5 L1395 184.0 L1399 188.0 Q1404 181.0 1410.5 177.5 L1410.5 182.0 Q1405 186.0 1399.5 193.8 Z" fill="#1e64c8"/><path d="M1387 197.5H1559 M1414.5 175V197 M1443.5 175V197 M1558.5 175V197" stroke="#ececec" stroke-width="1" shape-rendering="crispEdges"/><rect x="1417" y="199" width="25" height="19" fill="#2d4050"/><path d="M1391.5 208.5 L1395 206.0 L1399 210.0 Q1404 203.0 1410.5 199.5 L1410.5 204.0 Q1405 208.0 1399.5 215.8 Z" fill="#1e64c8"/><path d="M1387 219.5H1559 M1414.5 197V219 M1443.5 197V219 M1558.5 197V219" stroke="#ececec" stroke-width="1" shape-rendering="crispEdges"/><rect x="1417" y="221" width="25" height="19" fill="#958030"/><path d="M1391.5 230.5 L1395 228.0 L1399 232.0 Q1404 225.0 1410.5 221.5 L1410.5 226.0 Q1405 230.0 1399.5 237.8 Z" fill="#1e64c8"/><path d="M1387 241.5H1559 M1414.5 219V241 M1443.5 219V241 M1558.5 219V241" stroke="#ececec" stroke-width="1" shape-rendering="crispEdges"/><rect x="1417" y="243" width="25" height="19" fill="#ffffb4"/><path d="M1391.5 252.5 L1395 250.0 L1399 254.0 Q1404 247.0 1410.5 243.5 L1410.5 248.0 Q1405 252.0 1399.5 259.8 Z" fill="#1e64c8"/><path d="M1387 263.5H1559 M1414.5 241V263 M1443.5 241V263 M1558.5 241V263" stroke="#ececec" stroke-width="1" shape-rendering="crispEdges"/><rect x="1417" y="265" width="25" height="19" fill="#ffffb4"/><path d="M1391.5 274.5 L1395 272.0 L1399 276.0 Q1404 269.0 1410.5 265.5 L1410.5 270.0 Q1405 274.0 1399.5 281.8 Z" fill="#1e64c8"/><path d="M1387 285.5H1559 M1414.5 263V285 M1443.5 263V285 M1558.5 263V285" stroke="#ececec" stroke-width="1" shape-rendering="crispEdges"/><rect x="1417" y="287" width="25" height="19" fill="#958030"/><path d="M1391.5 296.5 L1395 294.0 L1399 298.0 Q1404 291.0 1410.5 287.5 L1410.5 292.0 Q1405 296.0 1399.5 303.8 Z" fill="#1e64c8"/><path d="M1387 307.5H1559 M1414.5 285V307 M1443.5 285V307 M1558.5 285V307" stroke="#ececec" stroke-width="1" shape-rendering="crispEdges"/><rect x="1417" y="309" width="25" height="19" fill="#2d4050"/><path d="M1391.5 318.5 L1395 316.0 L1399 320.0 Q1404 313.0 1410.5 309.5 L1410.5 314.0 Q1405 318.0 1399.5 325.8 Z" fill="#1e64c8"/><path d="M1387 329.5H1559 M1414.5 307V329 M1443.5 307V329 M1558.5 307V329" stroke="#ececec" stroke-width="1" shape-rendering="crispEdges"/><rect x="1417" y="331" width="25" height="19" fill="#3838ff"/><path d="M1391.5 340.5 L1395 338.0 L1399 342.0 Q1404 335.0 1410.5 331.5 L1410.5 336.0 Q1405 340.0 1399.5 347.8 Z" fill="#1e64c8"/><path d="M1387 351.5H1559 M1414.5 329V351 M1443.5 329V351 M1558.5 329V351" stroke="#ececec" stroke-width="1" shape-rendering="crispEdges"/><rect x="1417" y="353" width="25" height="19" fill="#808080"/><path d="M1391.5 362.5 L1395 360.0 L1399 364.0 Q1404 357.0 1410.5 353.5 L1410.5 358.0 Q1405 362.0 1399.5 369.8 Z" fill="#1e64c8"/><path d="M1387 373.5H1559 M1414.5 351V373 M1443.5 351V373 M1558.5 351V373" stroke="#ececec" stroke-width="1" shape-rendering="crispEdges"/><rect x="1417" y="375" width="25" height="19" fill="#8000c0"/><path d="M1391.5 384.5 L1395 382.0 L1399 386.0 Q1404 379.0 1410.5 375.5 L1410.5 380.0 Q1405 384.0 1399.5 391.8 Z" fill="#1e64c8"/><path d="M1387 395.5H1559 M1414.5 373V395 M1443.5 373V395 M1558.5 373V395" stroke="#ececec" stroke-width="1" shape-rendering="crispEdges"/><rect x="1387.5" y="154.5" width="27" height="20" fill="none" stroke="#7eb4ea" stroke-width="1"/></svg><div class="t" style="left:1448px;top:159px;font-size:11px">Top Assy</div><div class="t" style="left:1448px;top:181px;font-size:11px">Top Silk</div><div class="t" style="left:1448px;top:203px;font-size:11px">Top Mask</div><div class="t" style="left:1448px;top:225px;font-size:11px">Top Paste</div><div class="t" style="left:1448px;top:247px;font-size:11px">Top</div><div class="t" style="left:1540px;top:247px;font-size:11px">(1)</div><div class="t" style="left:1448px;top:269px;font-size:11px">Bottom</div><div class="t" style="left:1540px;top:269px;font-size:11px">(2)</div><div class="t" style="left:1448px;top:291px;font-size:11px">Bottom Paste</div><div class="t" style="left:1448px;top:313px;font-size:11px">Bottom Mask</div><div class="t" style="left:1448px;top:335px;font-size:11px">Bottom Silk</div><div class="t" style="left:1448px;top:357px;font-size:11px">Bottom Assy</div><div class="t" style="left:1448px;top:379px;font-size:11px">Board Outline</div><div class="a" style="left:1472px;top:413px;width:81px;height:22px;background:#fff;border:1px solid #a8a8a8"></div><div class="t" style="left:1476px;top:418px;font-size:11px">Contrast</div><div class="a" style="left:1376px;top:445px;width:209px;height:379px;border-top:1px solid #fff;border-left:1px solid #fff"></div><div class="t" style="left:1384px;top:457px;font-size:12px">Design Manager</div><div class="a" style="left:1517px;top:450px;width:30px;height:30px;background:#cce4f7;border:1px solid #7eb4ea"></div><div class="a" style="left:1384px;top:483px;width:193px;height:157px;background:#fff;border:1px solid #828790"></div><div class="t" style="left:1387px;top:487px;font-size:11px">J1 - 644456-5</div><div class="t" style="left:1387px;top:500px;font-size:11px">J2 - 644456-2</div><div class="t" style="left:1387px;top:513px;font-size:11px">J3 - 2-644456-4</div><div class="t" style="left:1387px;top:526px;font-size:11px">J4 - SWR204-NRTN-D11-RA</div><div class="t" style="left:1387px;top:539px;font-size:11px">J5 - SWR204-NRTN-D11-RA</div><div class="t" style="left:1387px;top:552px;font-size:11px">J6 - 43045-1601</div><div class="t" style="left:1387px;top:565px;font-size:11px">J7 - 90814-0026</div><div class="t" style="left:1387px;top:578px;font-size:11px">J8 - 951116-4620</div><div class="t" style="left:1384px;top:644px;font-size:12px">Component Pins:</div><div class="a" style="left:1384px;top:660px;width:193px;height:156px;background:#fff;border:1px solid #828790"></div><svg style="left:0;top:0" width="1" height="1"><path d="M1362.0 130.5L1365.5 127L1369.0 130.5" fill="none" stroke="#606060" stroke-width="2"/><path d="M1362.0 796.5L1365.5 800L1369.0 796.5" fill="none" stroke="#606060" stroke-width="2"/><path d="M181.5 812.0L178 815.5L181.5 819.0" fill="none" stroke="#606060" stroke-width="2"/><path d="M1346.5 812.0L1350 815.5L1346.5 819.0" fill="none" stroke="#606060" stroke-width="2"/><path d="M1536 421L1540 425L1544 421" fill="none" stroke="#404040" stroke-width="1.5"/><path d="M1394 425.5H1403 M1398.5 421V430" stroke="#008000" stroke-width="2.2"/><rect x="1400" y="419" width="4" height="4" fill="#f00"/><rect x="1402" y="417" width="4" height="4" fill="#0020ff"/><rect x="1426.5" y="421.5" width="11" height="9" fill="#fff" stroke="#000" stroke-width="1.2"/><path d="M1428 424.5H1436 M1428 426.5H1436 M1428 428.5H1436" stroke="#000" stroke-width="1"/><rect x="1434" y="419" width="4" height="4" fill="#f00"/><rect x="1436" y="417" width="4" height="4" fill="#0020ff"/><rect x="1561" y="423" width="6" height="6" fill="#a0a0a0"/><rect x="1563" y="421" width="6" height="6" fill="#606080"/><rect x="1566" y="418" width="6" height="6" fill="#000"/><path d="M1502 459.5H1507 M1502 461.5H1507 M1502 463.5H1507 M1502 465.5H1507 M1502 467.5H1507" stroke="#000" stroke-width="1"/><path d="M1502 469.5H1507" stroke="#f00" stroke-width="1"/><path d="M1500 463Q1497 465 1500 467" stroke="#000" fill="none"/><rect x="1528.5" y="458.5" width="9" height="12" rx="1.5" fill="#00ffff" stroke="#007000" stroke-width="1.2"/><path d="M1526 461H1528 M1526 464H1528 M1526 467H1528 M1538 461H1540 M1538 464H1540 M1538 467H1540" stroke="#000" stroke-width="1.3"/><path d="M1556 460L1562 466L1568 468" stroke="#0000d0" stroke-width="1.3" fill="none"/><circle cx="1556" cy="459.5" r="2" fill="#fff" stroke="#0000d0"/><circle cx="1568" cy="469" r="2" fill="#fff" stroke="#0000d0"/></svg><svg style="left:0;top:0" width="1" height="1"><rect x="1587" y="839" width="2" height="2" fill="#b8b8b8"/><rect x="1584" y="842" width="2" height="2" fill="#b8b8b8"/><rect x="1587" y="842" width="2" height="2" fill="#b8b8b8"/><rect x="1581" y="845" width="2" height="2" fill="#b8b8b8"/><rect x="1584" y="845" width="2" height="2" fill="#b8b8b8"/><rect x="1587" y="845" width="2" height="2" fill="#b8b8b8"/></svg><div class="a" style="left:170px;top:53px;width:175px;height:127px;background:rgba(0,0,0,0.18);filter:blur(1.5px)"></div><div class="a" style="left:167px;top:50px;width:176px;height:128px;background:#f0f0f0;border:1px solid #979797"></div><div class="a" style="left:197px;top:52px;width:1px;height:124px;background:#e2e2e2"></div><div class="a" style="left:198px;top:52px;width:1px;height:124px;background:#fff"></div><div class="a" style="left:199px;top:99px;width:141px;height:1px;background:#e2e2e2"></div><div class="a" style="left:199px;top:149px;width:141px;height:1px;background:#e2e2e2"></div><div class="t" style="left:187px;top:58px;font-size:12px;color:rgba(0,0,0,0.09)">www.softpedia.com</div><div class="t" style="left:201px;top:59px;font-size:12px;color:#000">Arrange Components</div><div class="t" style="left:201px;top:81px;font-size:12px;color:#000">Placement by List...</div><div class="t" style="left:201px;top:108px;font-size:12px;color:#000">Run Auto-placement</div><div class="t" style="left:201px;top:130px;font-size:12px;color:#6d6d6d">Auto-place Selected</div><div class="t" style="left:201px;top:158px;font-size:12px;color:#000">Placement Setup...</div><svg style="left:0;top:0" width="1" height="1"><path d="M173.5 57.5V69.5H187" stroke="#00d000" stroke-width="1.5" fill="none"/><rect x="176.5" y="60.5" width="3" height="6" fill="#00ffff" stroke="#006000"/><rect x="183.5" y="60.5" width="3" height="6" fill="#00ffff" stroke="#006000"/><path d="M175 62H176 M175 65H176 M180 62H183 M180 65H183 M187 62H188 M187 65H188" stroke="#000"/><rect x="175.5" y="112.5" width="5" height="5" fill="#00ffff" stroke="#006000"/><rect x="183.5" y="107.5" width="3" height="5" fill="#00ffff" stroke="#006000"/><path d="M174 113.5H175 M174 116.5H175 M181 113.5H182 M181 116.5H182 M182 108.5H183 M182 111.5H183 M187 108.5H188 M187 111.5H188" stroke="#000"/><path d="M176.5 111V107.5H180.5 M186 114V118H182" stroke="#000" stroke-width="1.2" fill="none"/><path d="M180 106L182 107.5L180 109Z M182 116.5L180 118L182 119.5Z" fill="#000"/><rect x="173" y="129" width="6" height="6" fill="#a0a0a0"/><rect x="182" y="129" width="5" height="6" fill="#a0a0a0"/><path d="M172 130H173 M172 133H173 M179 130H182 M179 133H182 M187 130H188 M187 133H188" stroke="#a8a8a8"/><path d="M185 137V140H181" stroke="#a0a0a0" fill="none"/><rect x="173.5" y="160.5" width="11" height="8.5" fill="#fff" stroke="#000" stroke-width="1.3"/><path d="M175 163.5H182 M175 165.5H182 M175 167.5H182" stroke="#000" stroke-width="1"/><rect x="181.5" y="154.5" width="4" height="6" fill="#00ffff" stroke="#007000"/></svg></body></html>
